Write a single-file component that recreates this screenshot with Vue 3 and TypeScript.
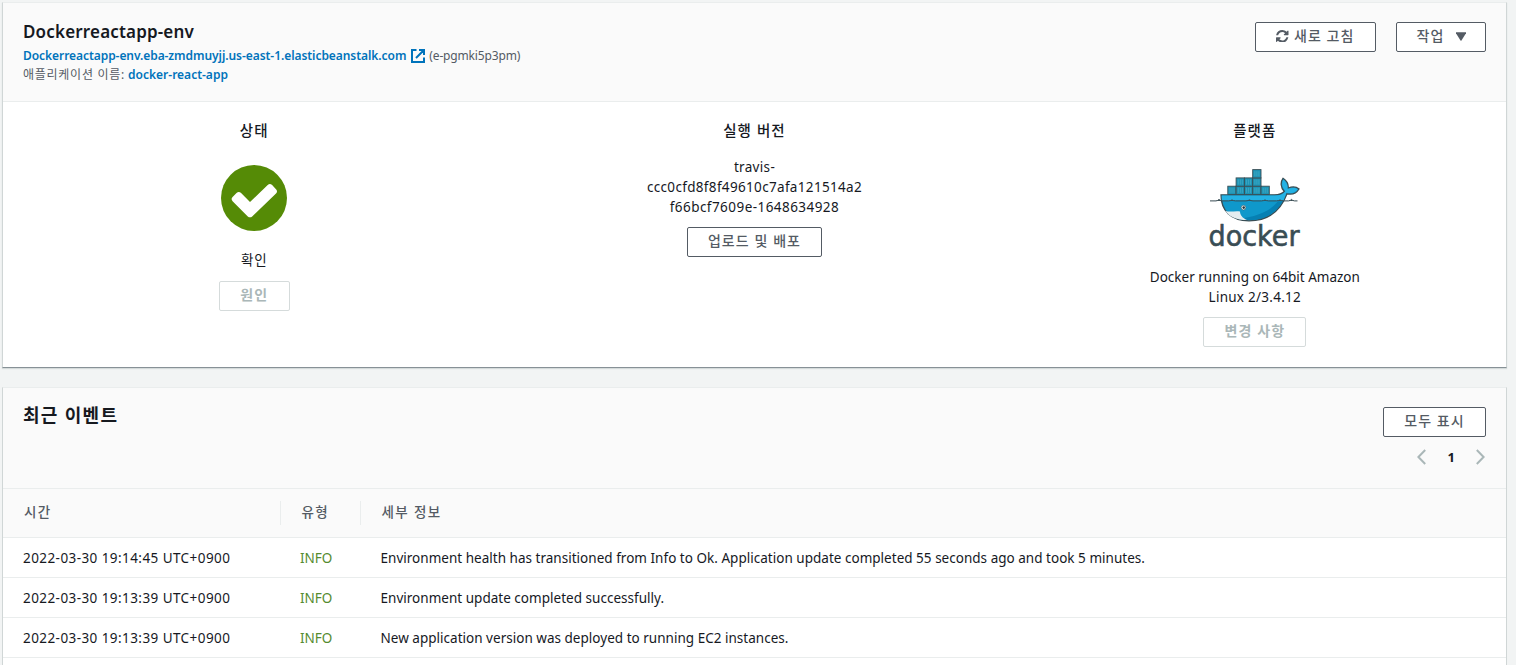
<script setup lang="ts">
interface EventRow {
  time: string
  type: string
  detail: string
}

const events: EventRow[] = [
  {
    time: '2022-03-30 19:14:45 UTC+0900',
    type: 'INFO',
    detail:
      'Environment health has transitioned from Info to Ok. Application update completed 55 seconds ago and took 5 minutes.',
  },
  {
    time: '2022-03-30 19:13:39 UTC+0900',
    type: 'INFO',
    detail: 'Environment update completed successfully.',
  },
  {
    time: '2022-03-30 19:13:39 UTC+0900',
    type: 'INFO',
    detail: 'New application version was deployed to running EC2 instances.',
  },
]

// Containers on the whale's back, as [column, row] counted from the bottom left.
const boxes: [number, number][] = [
  [0, 0], [1, 0], [2, 0], [3, 0], [4, 0],
  [1, 1], [2, 1], [3, 1],
  [3, 2],
]
</script>

<template>
  <main class="page">
    <section class="card overview">
      <header class="head">
        <div class="titles">
          <h1>Dockerreactapp-env</h1>
          <div class="meta">
            <a class="url">Dockerreactapp-env.eba-zmdmuyjj.us-east-1.elasticbeanstalk.com</a>
            <svg class="ext" viewBox="0 0 14 14" width="14" height="14">
              <path d="M5.500 1H1v12h12V8.500M8 1h5v5M13 1L5 9" />
            </svg>
            <span class="envid">(e-pgmki5p3pm)</span>
          </div>
          <div class="meta">
            <span class="label">애플리케이션 이름:</span>
            <a class="app">docker-react-app</a>
          </div>
        </div>
        <div class="actions">
          <button class="btn refresh">
            <svg viewBox="0 0 1536 1536" width="12.5" height="12.5">
              <path
                d="M1511 928q0 5-1 7-64 268-268 434.500T764 1536q-146 0-282.500-55T238 1324l-129 129q-19 19-45 19t-45-19-19-45V960q0-26 19-45t45-19h448q26 0 45 19t19 45-19 45l-137 137q71 66 161 102t187 36q134 0 250-65t186-179q11-17 53-117 8-23 30-23h192q13 0 22.500 9.500t9.500 22.500zm25-800v448q0 26-19 45t-45 19h-448q-26 0-45-19t-19-45 19-45l138-138Q969 256 768 256q-134 0-250 65T332 500q-11 17-53 117-8 23-30 23H50q-13 0-22.500-9.500T18 608v-7q65-268 270-434.500T768 0q146 0 284 55.500T1297 212l130-129q19-19 45-19t45 19 19 45z"
              />
            </svg>
            <span>새로 고침</span>
          </button>
          <button class="btn menu">
            <span>작업</span>
            <svg viewBox="0 0 10 9" width="10" height="9"><path d="M0 .3h10v1L5.300 8.700h-.6L0 1.300z" /></svg>
          </button>
        </div>
      </header>

      <div class="stats">
        <div class="stat">
          <h2>상태</h2>
          <svg class="ok" viewBox="0 0 66 66" width="66" height="66">
            <circle cx="33" cy="33" r="33" fill="#558b06" />
            <path
              d="M11.600 31.900l3.900-3.900q2.300-2 4.600 0L29 37l17.700-17q2.200-2 4.400 0l3.900 4.200q2 2.200 0 4.400L31.200 51.400q-2.200 1.800-4.400 0L11.600 36.200q-2-2.200 0-4.300z"
              fill="#fff"
            />
          </svg>
          <p class="state">확인</p>
          <button class="btn cause" disabled>원인</button>
        </div>
        <div class="stat">
          <h2>실행 버전</h2>
          <p class="version">travis-<br />ccc0cfd8f8f49610c7afa121514a2<br /><span class="tail">f66bcf7609e-1648634928</span></p>
          <button class="btn deploy">업로드 및 배포</button>
        </div>
        <div class="stat">
          <h2>플랫폼</h2>
          <svg class="docker" viewBox="0 0 94 82" width="94" height="82">
            <g fill="#1d93b4" stroke="#394d54" stroke-width=".9">
              <g v-for="([c, r], i) in boxes" :key="i">
                <rect :x="19.800 + c * 8.300" :y="19.200 - r * 8.300" width="8.300" height="8.300" />
                <path
                  :d="`M${22 + c * 8.300} ${20.800 - r * 8.300}v5.100m2 -5.100v5.100m2 -5.100v5.100`"
                  stroke-width=".6"
                  stroke="#4fb3cc"
                />
              </g>
            </g>
            <path
              d="M13 27.800H66.500C71 27.800 74 27 76.300 24.500 72.500 20.500 72.300 15 75 11.300 78.500 13.500 80.500 17 80.300 21 84.500 19.200 88.500 19.800 91 22 88.300 26.500 83.500 27.800 79 26.800 73 43 61 53.800 41 53.800 23 53.800 13 44 13 27.800z"
              fill="#0f98cb"
              stroke="#394d54"
              stroke-width="1.300"
            />
            <path d="M13.700 28.500H67C72 28.500 75.500 27 77.500 24 73.500 20 73.500 16 75.200 12.500 78.500 15 80 18.500 79.500 22 84 20.400 87.500 20.800 89.800 22.200 87 25.800 83 26.600 78.400 25.800L75.500 33.500H13.900z" fill="#24b2e4" />
            <path d="M31 51.500C50 49.500 62 44 70 34.300H75C67.500 46.500 57 53.100 41 53.100 37 53.100 34 52.600 31 51.500z" fill="#0680b3" />
            <path d="M17.300 44C23 45.300 28 43.500 32 44.500 32 48 34.500 51 39 53.100 29 53 21.500 50 17.300 44z" fill="#e5edf0" />
            <path
              d="M2 33.900h6q2-.2 3-1.500 1 1.300 3 1.500h6.500q2.200-.1 3.500-1 1.300.9 3.500 1h10.500q2.200-.1 3.500-1 1.300.9 3.500 1h8.500q2.200-.1 3.500-1 1.300.9 3.500 1h8q2.200-.1 3.500-1 1.300.9 3.500 1h5q2-.2 3-1.500 1 1.300 3 1.500h3"
              fill="#394d54"
              stroke="#394d54"
            />
            <circle cx="35.500" cy="40.600" r="2.300" fill="#fff" stroke="#394d54" stroke-width=".5" />
            <circle cx="35.700" cy="40.600" r="1.300" fill="#23353c" />
            <text x="0.500" y="78.500" textLength="91" lengthAdjust="spacingAndGlyphs">docker</text>
          </svg>
          <p class="platform">Docker running on 64bit Amazon<br /><span class="wide">Linux 2/3.4.12</span></p>
          <button class="btn change" disabled>변경 사항</button>
        </div>
      </div>
    </section>

    <section class="card events">
      <header class="head events-head">
        <h3>최근 이벤트</h3>
        <div class="tools">
          <button class="btn all">모두 표시</button>
          <nav class="pager">
            <svg viewBox="0 0 9 16" width="9" height="16"><path d="M8.200 1L1.400 8l6.800 7" /></svg>
            <b>1</b>
            <svg viewBox="0 0 9 16" width="9" height="16"><path d="M.8 1l6.800 7L.8 15" /></svg>
          </nav>
        </div>
      </header>
      <div class="row thead">
        <span class="c1">시간</span>
        <span class="c2">유형</span>
        <span class="c3">세부 정보</span>
      </div>
      <div v-for="(e, i) in events" :key="i" class="row">
        <span class="c1 time">{{ e.time }}</span>
        <span class="c2 info">{{ e.type }}</span>
        <span class="c3 detail">{{ e.detail }}</span>
      </div>
      <div class="row"></div>
    </section>
  </main>
</template>

<style>
html,
body {
  background: #f2f4f4;
  overflow: hidden;
}
</style>

<style scoped>
.page {
  box-sizing: border-box;
  height: 665px;
  overflow: hidden;
  padding: 2px 9px 0 2px;
  color: #16191f;
  font: 13.500px/20px 'Noto Sans', 'Noto Sans CJK KR', sans-serif;
}
h1,
h2,
h3,
p {
  margin: 0;
}
.card {
  box-sizing: border-box;
  background: #fff;
  border: 1px solid #d0d6d6;
  border-top-color: #eaeded;
  white-space: nowrap;
}
.overview {
  height: 366px;
  border-bottom-color: #879196;
  box-shadow: 0 1px 1px #d5dbdb;
}
.events {
  margin-top: 19px;
  height: 400px;
}
.head {
  box-sizing: border-box;
  display: flex;
  justify-content: space-between;
  height: 99px;
  padding: 19px 20px 0;
  background: #fafafa;
  border-bottom: 1px solid #eaeded;
}
h1 {
  font-size: 17px;
  line-height: 22px;
  font-weight: 600;
  letter-spacing: 0.170px;
  margin-top: -1px;
}
.meta {
  display: flex;
  align-items: center;
  height: 19px;
  font-size: 12px;
  color: #545b64;
}
.meta:nth-child(2) {
  margin-top: 3px;
}
.meta a {
  color: #0073bb;
  font-weight: 600;
}
.meta .url {
  letter-spacing: -0.060px;
}
.envid {
  letter-spacing: -0.160px;
}
.ext {
  margin: 0 4px 0 5px;
  fill: none;
  stroke: #0073bb;
  stroke-width: 2;
}
.label {
  margin-right: 3px;
  letter-spacing: 0.740px;
}
.actions {
  display: flex;
  gap: 20px;
}
.btn {
  box-sizing: border-box;
  display: flex;
  align-items: center;
  justify-content: center;
  height: 30px;
  padding: 0 0 2px;
  background: #fff;
  border: 1px solid #545b64;
  border-radius: 2px;
  color: #545b64;
  font: 500 14px/20px 'Noto Sans', 'Noto Sans CJK KR', sans-serif;
  letter-spacing: 1.080px;
  white-space: nowrap;
}
.btn:disabled {
  border-color: #d5dbdb;
  color: #aab7b8;
  font-weight: 700;
}
.btn svg {
  fill: #545b64;
}
.refresh {
  width: 121px;
  gap: 5px;
}
.menu {
  width: 90px;
  gap: 12px;
  padding-left: 1px;
}
.cause {
  width: 71px;
}
.deploy {
  width: 135px;
}
.change,
.all {
  width: 103px;
}
.stats {
  display: grid;
  grid-template-columns: repeat(3, 1fr);
  padding: 0 1px;
}
.stat {
  display: flex;
  flex-direction: column;
  align-items: center;
  text-align: center;
}
h2 {
  margin: 18px 0 1px;
  font-size: 14.500px;
  line-height: 20px;
  font-weight: 500;
  letter-spacing: 1.100px;
}
.ok {
  margin-top: 24px;
}
.state {
  margin: 19px 0 11px;
  letter-spacing: 0.800px;
}
.version {
  margin: 16px 0 10px;
  letter-spacing: 0.330px;
}
.tail {
  letter-spacing: 0.450px;
}
.docker {
  margin-top: 26px;
  overflow: visible;
}
.docker text {
  font: 28px 'DejaVu Sans', sans-serif;
  fill: #394d54;
  stroke: #394d54;
  stroke-width: 0.600;
  stroke-linejoin: round;
}
.platform {
  margin: 18px 0 10px;
}
.wide {
  letter-spacing: 0.270px;
}
.events-head {
  height: 101px;
}
h3 {
  font-size: 18px;
  line-height: 24px;
  font-weight: 600;
  letter-spacing: 1.300px;
  margin-top: -4px;
}
.pager {
  display: flex;
  align-items: center;
  justify-content: flex-end;
  height: 20px;
  margin: 10px 1px 0 0;
}
.pager b {
  margin: 0 21px 0 22px;
  font-size: 13px;
}
.pager svg {
  fill: none;
  stroke: #aab7b8;
  stroke-width: 2;
}
.row {
  box-sizing: border-box;
  display: grid;
  grid-template-columns: 277px 80px 1fr;
  align-items: center;
  height: 40px;
  border-bottom: 1px solid #eaeded;
}
.row span {
  padding-left: 20px;
}
.time {
  letter-spacing: 0.430px;
}
.row .detail {
  padding-left: 20.500px;
  letter-spacing: 0.020px;
}
.row.thead {
  height: 49px;
  background: #fafafa;
  color: #545b64;
  font-weight: 500;
}
.thead span {
  line-height: 22px;
  padding: 0 0 2px 21px;
  letter-spacing: 1.350px;
}
.thead .c2,
.thead .c3 {
  padding-left: 20.500px;
  border-left: 1px solid #eaeded;
}
.info {
  color: #558b2f;
}
</style>
